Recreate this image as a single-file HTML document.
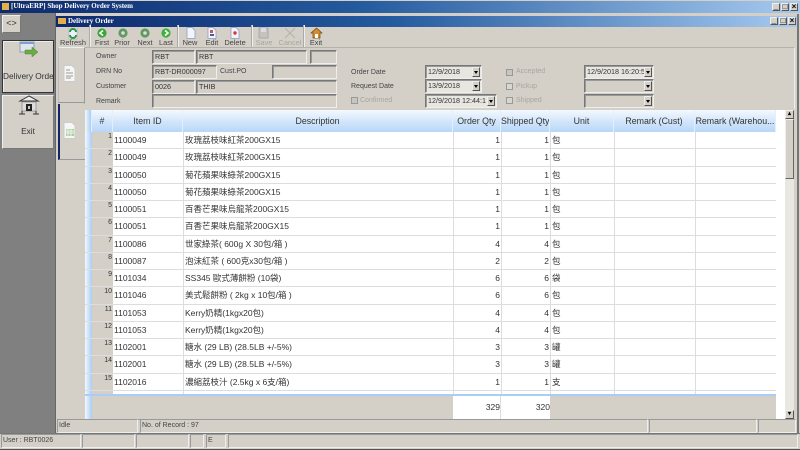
<!DOCTYPE html>
<html><head><meta charset="utf-8">
<style>
html,body{margin:0;padding:0;background:#d4d0c8}
body{width:800px;height:450px;overflow:hidden;background:#d4d0c8;position:relative;font-family:"Liberation Sans","Noto Sans CJK TC",sans-serif;font-size:8px;color:#333;filter:blur(.35px)}
div{position:absolute;box-sizing:border-box;white-space:nowrap}
svg{position:absolute}
.lb{font-size:7px;color:#444;line-height:10px}
.in{background:#d4d0c8;border:1px solid;border-color:#777 #eee #eee #777;box-shadow:inset 1px 1px 0 #999;font-size:7.2px;line-height:12px;padding-left:2px;height:14px;color:#333;overflow:hidden}
.wh{background:#e8e6e0}
.ar{width:8px;height:10px;background:#d4d0c8;border:1px solid;border-color:#eee #555 #555 #eee;top:1px;right:1px}
.ar:after{content:"";position:absolute;left:1px;top:3px;border:2px solid transparent;border-top:3px solid #000}
.tb{font-size:7.4px;color:#444;text-align:center;top:38px;line-height:10px;width:30px}
.dis{color:#a8a6a0}
.sep{top:25px;width:2px;height:22px;border-left:1px solid #aaa;border-right:1px solid #f0eee8}
.h{top:110px;height:23px;background:linear-gradient(#f3f9fe,#cfe4fa 55%,#b6d5f7);font-size:8.8px;line-height:22px;text-align:center;color:#333;border-right:1px solid #e5eefa;overflow:hidden}
.rw{left:85px;width:691px;height:17.25px;background:#fff;border-bottom:1px solid #ddd}
.rm{left:0;top:0;width:7px;height:100%;background:linear-gradient(90deg,#f3f9fe,#a9cdf5)}
.rn{left:7px;top:0;width:21px;height:100%;background:#d4d0c8;font-size:7px;text-align:right;padding-right:1px;line-height:10px;color:#333}
.c{top:0;font-size:8.5px;line-height:17px;color:#333}
.v{top:0;width:1px;height:100%;background:#ddd}
.win{font-size:8px;text-align:center;background:#d4d0c8;border:1px solid;border-color:#eee #555 #555 #eee;width:8px;height:8px;line-height:6px;color:#000;font-weight:bold}
.st{top:419px;height:14px;background:#d4d0c8;border:1px solid;border-color:#999 #eee #eee #999;font-size:7px;line-height:12px;padding-left:1px;color:#444}
.sb{top:434px;height:14px;border:1px solid;border-color:#999 #eee #eee #999;font-size:7px;line-height:12px;padding-left:1px;color:#444}
</style></head><body>

<div style="left:0;top:1px;width:800px;height:12px;background:linear-gradient(90deg,#0e2a6c,#245a9e 45%,#a6caf0);color:#fff;font:bold 7px/11px 'Liberation Serif',serif;padding-left:11px">[UltraERP] Shop Delivery Order System</div>
<div style="left:2px;top:3px;width:7px;height:7px;background:#e2b04a"></div>
<div class="win" style="left:772px;top:3px">_</div><div class="win" style="left:781px;top:3px">□</div><div class="win" style="left:790px;top:3px">×</div>

<div style="left:0;top:13px;width:55px;height:420px;background:#808080"></div>

<div style="left:2px;top:15px;width:19px;height:18px;background:#d4d0c8;border:1px solid;border-color:#eee #777 #777 #eee;font-size:9px;text-align:center;line-height:15px;color:#333">&lt;&gt;</div>

<div style="left:2px;top:40px;width:52px;height:53px;background:#d4d0c8;border:1px solid #333;box-shadow:inset 1px 1px 0 #eee;font-size:8.3px;line-height:70px;text-align:center;color:#333;overflow:hidden">Delivery Order</div>
<svg style="left:19px;top:41px" width="20" height="18" viewBox="0 0 20 18"><rect x="1" y="1" width="14" height="10" fill="#dfe5ec" stroke="#8fa0b8"/><rect x="1" y="1" width="14" height="2" fill="#7f9fcf"/><path d="M6 9h7V6l6 5-6 5v-3H6z" fill="#6cab45" stroke="#4b8a2c" stroke-width=".5"/></svg>

<div style="left:2px;top:95px;width:52px;height:54px;background:#d4d0c8;border:1px solid;border-color:#eee #777 #777 #eee;font-size:8.3px;line-height:70px;text-align:center;color:#333">Exit</div>
<svg style="left:18px;top:95px" width="22" height="22" viewBox="0 0 22 22"><path d="M11 1 2 6h18z" fill="#eee" stroke="#333"/><rect x="4" y="7" width="14" height="9" fill="#ddd" stroke="#777" stroke-width=".6"/><rect x="8" y="9" width="6" height="7" fill="#222"/><rect x="10" y="11" width="2" height="3" fill="#ccc"/><path d="M1 19h6M15 19h6M4 16v3M18 16v3" stroke="#333" fill="none"/></svg>

<div style="left:55px;top:13px;width:1px;height:420px;background:#666"></div>
<div style="left:56px;top:16px;width:742px;height:11px;background:linear-gradient(90deg,#0e2a6c,#245a9e 45%,#a6caf0);color:#fff;font:bold 7px/10px 'Liberation Serif',serif;padding-left:12px">Delivery Order</div>
<div style="left:58px;top:18px;width:8px;height:6px;background:#e2b04a"></div>
<div class="win" style="left:770px;top:17px">_</div><div class="win" style="left:779px;top:17px">□</div><div class="win" style="left:788px;top:17px">×</div>
<div style="left:797px;top:14px;width:2px;height:419px;background:#777"></div>

<!-- Toolbar -->
<svg style="left:67px;top:28px" width="12" height="12" viewBox="0 0 12 12"><rect x="2" y="0" width="8" height="11" fill="#eef" stroke="#99a" stroke-width=".5"/><path d="M3 4a3 3 0 0 1 6 0" stroke="#2a9a3a" fill="none" stroke-width="2"/><path d="M9 7a3 3 0 0 1-6 0" stroke="#2a9a3a" fill="none" stroke-width="2"/></svg>
<div class="tb" style="left:58px">Refresh</div>
<div class="sep" style="left:89px"></div>
<svg style="left:96px;top:28px" width="12" height="10"><circle cx="6" cy="5" r="4.6" fill="#3aa63a"/><path d="M7 2.5 4 5l3 2.500" stroke="#fff" stroke-width="1.6" fill="none"/></svg>
<svg style="left:117px;top:28px" width="12" height="10"><circle cx="6" cy="5" r="4.6" fill="#5f9a5f"/><circle cx="6" cy="5" r="1.8" fill="#ddd"/></svg>
<svg style="left:139px;top:28px" width="12" height="10"><circle cx="6" cy="5" r="4.6" fill="#5f9a5f"/><circle cx="6" cy="5" r="1.8" fill="#ddd"/></svg>
<svg style="left:160px;top:28px" width="12" height="10"><circle cx="6" cy="5" r="4.6" fill="#3eb03e"/><path d="M5 2.500 8 5 5 7.500" stroke="#fff" stroke-width="1.6" fill="none"/></svg>
<div class="tb" style="left:87px">First</div><div class="tb" style="left:107px">Prior</div><div class="tb" style="left:130px">Next</div><div class="tb" style="left:151px">Last</div>
<div class="sep" style="left:177px"></div>
<svg style="left:185px;top:27px" width="12" height="12"><path d="M2 .5h5l3 3v8H2z" fill="#f2f5fb" stroke="#8899bb" stroke-width=".7"/></svg>
<svg style="left:206px;top:27px" width="12" height="12"><path d="M2 .5h5l3 3v8H2z" fill="#f2f5fb" stroke="#8899bb" stroke-width=".7"/><path d="M4 3h3v3H4z" fill="#c55"/><path d="M4 7h4v2H4z" fill="#55a"/></svg>
<svg style="left:229px;top:27px" width="12" height="12"><path d="M2 .5h5l3 3v8H2z" fill="#f2f5fb" stroke="#8899bb" stroke-width=".7"/><circle cx="6" cy="6" r="1.7" fill="#d33"/></svg>
<div class="tb" style="left:175px">New</div><div class="tb" style="left:197px">Edit</div><div class="tb" style="left:220px">Delete</div>
<div class="sep" style="left:251px"></div>
<svg style="left:258px;top:27px" width="12" height="12"><rect x="1" y="1" width="9" height="10" fill="#c5c3bd" stroke="#aaa"/><rect x="3" y="1" width="5" height="4" fill="#ddd"/></svg>
<svg style="left:284px;top:27px" width="12" height="12"><path d="M1 1 11 11M11 1 1 11" stroke="#b5b3ad" stroke-width="1.2"/></svg>
<div class="tb dis" style="left:249px">Save</div><div class="tb dis" style="left:275px">Cancel</div>
<div class="sep" style="left:303px"></div>
<svg style="left:310px;top:27px" width="13" height="12"><path d="M6.500 1 1 6h2v5h7V6h2z" fill="#d98a2e" stroke="#6b4a1a" stroke-width=".7"/><rect x="5" y="7" width="3" height="4" fill="#fff"/></svg>
<div class="tb" style="left:301px">Exit</div>

<!-- Form panel -->
<div style="left:84px;top:47px;width:711px;height:62px;border:1px solid #b5b2aa;border-bottom:none;border-right-color:#eee"></div>
<div style="left:58px;top:47px;width:27px;height:56px;background:#d4d0c8;border:1px solid;border-color:#eee #999 #999 #bbb"></div>
<svg style="left:63px;top:65px" width="13" height="17"><path d="M1 .5h8l3 3v13H1z" fill="#f6f6f4" stroke="#ccc"/><path d="M3 5h4M3 8h7M3 11h7M3 13h5" stroke="#999"/></svg>
<div style="left:58px;top:104px;width:27px;height:56px;background:#d4d0c8;border-left:2px solid #14246a;border-bottom:1px solid #999"></div>
<svg style="left:63px;top:122px" width="13" height="17"><path d="M1 .5h8l3 3v13H1z" fill="#f6f6f4" stroke="#ccc"/><rect x="3" y="7" width="8" height="7" fill="#a8d48a"/><path d="M3 9h8M3 11h8M5 7v7M8 7v7" stroke="#eef"/></svg>

<div class="lb" style="left:96px;top:52px">Owner</div>
<div class="lb" style="left:96px;top:67px">DRN No</div>
<div class="lb" style="left:96px;top:82px">Customer</div>
<div class="lb" style="left:96px;top:97px">Remark</div>
<div class="in" style="left:152px;top:50px;width:43px">RBT</div>
<div class="in" style="left:196px;top:50px;width:111px">RBT</div>
<div class="in" style="left:310px;top:50px;width:27px"></div>
<div class="in" style="left:152px;top:65px;width:65px">RBT-DR000097</div>
<div class="lb" style="left:220px;top:67px">Cust.PO</div>
<div class="in" style="left:272px;top:65px;width:65px"></div>
<div class="in" style="left:152px;top:80px;width:43px">0026</div>
<div class="in" style="left:196px;top:80px;width:141px">THIB</div>
<div class="in" style="left:152px;top:94px;width:185px"></div>

<div class="lb" style="left:351px;top:68px">Order Date</div>
<div class="lb" style="left:351px;top:82px">Request Date</div>
<div class="lb dis" style="left:360px;top:96px">Confirmed</div>
<div style="left:351px;top:97px;width:7px;height:7px;background:#c8c6c0;border:1px solid #999"></div>
<div class="in wh" style="left:425px;top:65px;width:57px">12/9/2018<div class="ar"></div></div>
<div class="in wh" style="left:425px;top:79px;width:57px">13/9/2018<div class="ar"></div></div>
<div class="in wh" style="left:425px;top:94px;width:72px">12/9/2018 12:44:1<div class="ar"></div></div>

<div style="left:506px;top:69px;width:7px;height:7px;background:#c8c6c0;border:1px solid #999"></div>
<div class="lb dis" style="left:516px;top:67px">Accepted</div>
<div style="left:506px;top:83px;width:7px;height:7px;background:#d8d6d0;border:1px solid #999"></div>
<div class="lb dis" style="left:516px;top:82px">Pickup</div>
<div style="left:506px;top:97px;width:7px;height:7px;background:#d8d6d0;border:1px solid #999"></div>
<div class="lb dis" style="left:516px;top:96px">Shipped</div>
<div class="in wh" style="left:584px;top:65px;width:70px">12/9/2018 16:20:5<div class="ar"></div></div>
<div class="in" style="left:584px;top:79px;width:70px"><div class="ar"></div></div>
<div class="in" style="left:584px;top:94px;width:70px"><div class="ar"></div></div>

<!-- Grid -->
<div style="left:85px;top:110px;width:692px;height:310px;background:#d4d0c8"></div>
<div class="h" style="left:85px;width:7px;background:linear-gradient(90deg,#f3f9fe,#a9cdf5)"></div>
<div class="h" style="left:92px;width:21px">#</div>
<div class="h" style="left:113px;width:70px">Item ID</div>
<div class="h" style="left:183px;width:270px">Description</div>
<div class="h" style="left:453px;width:48px">Order Qty</div>
<div class="h" style="left:501px;width:49px">Shipped Qty</div>
<div class="h" style="left:550px;width:64px">Unit</div>
<div class="h" style="left:614px;width:81px">Remark (Cust)</div>
<div class="h" style="left:695px;width:81px">Remark (Warehou...</div>

<div class="rw" style="top:132px"><div class="rm"></div><div class="rn">1</div><div class="c" style="left:29px">1100049</div><div class="c" style="left:100px">玫瑰荔枝味紅茶200GX15</div><div class="c" style="left:368px;width:47px;text-align:right">1</div><div class="c" style="left:416px;width:48px;text-align:right">1</div><div class="c" style="left:467px">包</div><div class="v" style="left:98px"></div><div class="v" style="left:368px"></div><div class="v" style="left:416px"></div><div class="v" style="left:465px"></div><div class="v" style="left:529px"></div><div class="v" style="left:610px"></div></div>
<div class="rw" style="top:149.250px"><div class="rm"></div><div class="rn">2</div><div class="c" style="left:29px">1100049</div><div class="c" style="left:100px">玫瑰荔枝味紅茶200GX15</div><div class="c" style="left:368px;width:47px;text-align:right">1</div><div class="c" style="left:416px;width:48px;text-align:right">1</div><div class="c" style="left:467px">包</div><div class="v" style="left:98px"></div><div class="v" style="left:368px"></div><div class="v" style="left:416px"></div><div class="v" style="left:465px"></div><div class="v" style="left:529px"></div><div class="v" style="left:610px"></div></div>
<div class="rw" style="top:166.500px"><div class="rm"></div><div class="rn">3</div><div class="c" style="left:29px">1100050</div><div class="c" style="left:100px">菊花蘋果味綠茶200GX15</div><div class="c" style="left:368px;width:47px;text-align:right">1</div><div class="c" style="left:416px;width:48px;text-align:right">1</div><div class="c" style="left:467px">包</div><div class="v" style="left:98px"></div><div class="v" style="left:368px"></div><div class="v" style="left:416px"></div><div class="v" style="left:465px"></div><div class="v" style="left:529px"></div><div class="v" style="left:610px"></div></div>
<div class="rw" style="top:183.750px"><div class="rm"></div><div class="rn">4</div><div class="c" style="left:29px">1100050</div><div class="c" style="left:100px">菊花蘋果味綠茶200GX15</div><div class="c" style="left:368px;width:47px;text-align:right">1</div><div class="c" style="left:416px;width:48px;text-align:right">1</div><div class="c" style="left:467px">包</div><div class="v" style="left:98px"></div><div class="v" style="left:368px"></div><div class="v" style="left:416px"></div><div class="v" style="left:465px"></div><div class="v" style="left:529px"></div><div class="v" style="left:610px"></div></div>
<div class="rw" style="top:201px"><div class="rm"></div><div class="rn">5</div><div class="c" style="left:29px">1100051</div><div class="c" style="left:100px">百香芒果味烏龍茶200GX15</div><div class="c" style="left:368px;width:47px;text-align:right">1</div><div class="c" style="left:416px;width:48px;text-align:right">1</div><div class="c" style="left:467px">包</div><div class="v" style="left:98px"></div><div class="v" style="left:368px"></div><div class="v" style="left:416px"></div><div class="v" style="left:465px"></div><div class="v" style="left:529px"></div><div class="v" style="left:610px"></div></div>
<div class="rw" style="top:218.250px"><div class="rm"></div><div class="rn">6</div><div class="c" style="left:29px">1100051</div><div class="c" style="left:100px">百香芒果味烏龍茶200GX15</div><div class="c" style="left:368px;width:47px;text-align:right">1</div><div class="c" style="left:416px;width:48px;text-align:right">1</div><div class="c" style="left:467px">包</div><div class="v" style="left:98px"></div><div class="v" style="left:368px"></div><div class="v" style="left:416px"></div><div class="v" style="left:465px"></div><div class="v" style="left:529px"></div><div class="v" style="left:610px"></div></div>
<div class="rw" style="top:235.500px"><div class="rm"></div><div class="rn">7</div><div class="c" style="left:29px">1100086</div><div class="c" style="left:100px">世家綠茶( 600g X 30包/箱 )</div><div class="c" style="left:368px;width:47px;text-align:right">4</div><div class="c" style="left:416px;width:48px;text-align:right">4</div><div class="c" style="left:467px">包</div><div class="v" style="left:98px"></div><div class="v" style="left:368px"></div><div class="v" style="left:416px"></div><div class="v" style="left:465px"></div><div class="v" style="left:529px"></div><div class="v" style="left:610px"></div></div>
<div class="rw" style="top:252.750px"><div class="rm"></div><div class="rn">8</div><div class="c" style="left:29px">1100087</div><div class="c" style="left:100px">泡沫紅茶 ( 600克x30包/箱 )</div><div class="c" style="left:368px;width:47px;text-align:right">2</div><div class="c" style="left:416px;width:48px;text-align:right">2</div><div class="c" style="left:467px">包</div><div class="v" style="left:98px"></div><div class="v" style="left:368px"></div><div class="v" style="left:416px"></div><div class="v" style="left:465px"></div><div class="v" style="left:529px"></div><div class="v" style="left:610px"></div></div>
<div class="rw" style="top:270px"><div class="rm"></div><div class="rn">9</div><div class="c" style="left:29px">1101034</div><div class="c" style="left:100px">SS345 歐式薄餅粉 (10袋)</div><div class="c" style="left:368px;width:47px;text-align:right">6</div><div class="c" style="left:416px;width:48px;text-align:right">6</div><div class="c" style="left:467px">袋</div><div class="v" style="left:98px"></div><div class="v" style="left:368px"></div><div class="v" style="left:416px"></div><div class="v" style="left:465px"></div><div class="v" style="left:529px"></div><div class="v" style="left:610px"></div></div>
<div class="rw" style="top:287.250px"><div class="rm"></div><div class="rn">10</div><div class="c" style="left:29px">1101046</div><div class="c" style="left:100px">美式鬆餅粉 ( 2kg x 10包/箱 )</div><div class="c" style="left:368px;width:47px;text-align:right">6</div><div class="c" style="left:416px;width:48px;text-align:right">6</div><div class="c" style="left:467px">包</div><div class="v" style="left:98px"></div><div class="v" style="left:368px"></div><div class="v" style="left:416px"></div><div class="v" style="left:465px"></div><div class="v" style="left:529px"></div><div class="v" style="left:610px"></div></div>
<div class="rw" style="top:304.500px"><div class="rm"></div><div class="rn">11</div><div class="c" style="left:29px">1101053</div><div class="c" style="left:100px">Kerry奶精(1kgx20包)</div><div class="c" style="left:368px;width:47px;text-align:right">4</div><div class="c" style="left:416px;width:48px;text-align:right">4</div><div class="c" style="left:467px">包</div><div class="v" style="left:98px"></div><div class="v" style="left:368px"></div><div class="v" style="left:416px"></div><div class="v" style="left:465px"></div><div class="v" style="left:529px"></div><div class="v" style="left:610px"></div></div>
<div class="rw" style="top:321.750px"><div class="rm"></div><div class="rn">12</div><div class="c" style="left:29px">1101053</div><div class="c" style="left:100px">Kerry奶精(1kgx20包)</div><div class="c" style="left:368px;width:47px;text-align:right">4</div><div class="c" style="left:416px;width:48px;text-align:right">4</div><div class="c" style="left:467px">包</div><div class="v" style="left:98px"></div><div class="v" style="left:368px"></div><div class="v" style="left:416px"></div><div class="v" style="left:465px"></div><div class="v" style="left:529px"></div><div class="v" style="left:610px"></div></div>
<div class="rw" style="top:339px"><div class="rm"></div><div class="rn">13</div><div class="c" style="left:29px">1102001</div><div class="c" style="left:100px">糖水 (29 LB) (28.5LB +/-5%)</div><div class="c" style="left:368px;width:47px;text-align:right">3</div><div class="c" style="left:416px;width:48px;text-align:right">3</div><div class="c" style="left:467px">罐</div><div class="v" style="left:98px"></div><div class="v" style="left:368px"></div><div class="v" style="left:416px"></div><div class="v" style="left:465px"></div><div class="v" style="left:529px"></div><div class="v" style="left:610px"></div></div>
<div class="rw" style="top:356.250px"><div class="rm"></div><div class="rn">14</div><div class="c" style="left:29px">1102001</div><div class="c" style="left:100px">糖水 (29 LB) (28.5LB +/-5%)</div><div class="c" style="left:368px;width:47px;text-align:right">3</div><div class="c" style="left:416px;width:48px;text-align:right">3</div><div class="c" style="left:467px">罐</div><div class="v" style="left:98px"></div><div class="v" style="left:368px"></div><div class="v" style="left:416px"></div><div class="v" style="left:465px"></div><div class="v" style="left:529px"></div><div class="v" style="left:610px"></div></div>
<div class="rw" style="top:373.500px"><div class="rm"></div><div class="rn">15</div><div class="c" style="left:29px">1102016</div><div class="c" style="left:100px">濃縮荔枝汁 (2.5kg x 6支/箱)</div><div class="c" style="left:368px;width:47px;text-align:right">1</div><div class="c" style="left:416px;width:48px;text-align:right">1</div><div class="c" style="left:467px">支</div><div class="v" style="left:98px"></div><div class="v" style="left:368px"></div><div class="v" style="left:416px"></div><div class="v" style="left:465px"></div><div class="v" style="left:529px"></div><div class="v" style="left:610px"></div></div>
<div class="rw" style="top:390.750px;height:3.500px;border:none"><div class="rm"></div><div class="rn"></div><div class="v" style="left:98px"></div><div class="v" style="left:368px"></div><div class="v" style="left:416px"></div><div class="v" style="left:465px"></div><div class="v" style="left:529px"></div><div class="v" style="left:610px"></div></div>

<div style="left:85px;top:394px;width:691px;height:2px;background:#a9cdf5"></div>
<div style="left:85px;top:396px;width:7px;height:23px;background:linear-gradient(90deg,#f3f9fe,#a9cdf5)"></div>
<div style="left:453px;top:396px;width:48px;height:23px;background:#fff;border-right:1px solid #ddd;font-size:8.500px;line-height:22px;text-align:right;color:#333">329</div>
<div style="left:501px;top:396px;width:49px;height:23px;background:#fff;font-size:8.500px;line-height:22px;text-align:right;color:#333">320</div>
<div style="left:85px;top:419px;width:692px;height:1px;background:#7f9db9"></div>

<!-- scrollbar -->
<div style="left:776px;top:110px;width:9px;height:310px;background:#fff"></div>
<div style="left:785px;top:110px;width:9px;height:310px;background:#e9e7e2"></div>
<div class="win" style="left:785px;top:110px;width:9px;height:9px;line-height:7px;font-size:6px">▴</div>
<div style="left:785px;top:119px;width:9px;height:60px;background:#d4d0c8;border:1px solid;border-color:#eee #666 #666 #eee"></div>
<div class="win" style="left:785px;top:410px;width:9px;height:9px;line-height:7px;font-size:6px">▾</div>

<!-- status -->
<div class="st" style="left:57px;width:81px">Idle</div>
<div class="st" style="left:140px;width:508px">No. of Record : 97</div>
<div class="st" style="left:649px;width:108px"></div>
<div class="st" style="left:758px;width:38px"></div>
<div style="left:0;top:433px;width:800px;height:1px;background:#777"></div>
<div class="sb" style="left:1px;width:80px">User : RBT0026</div>
<div class="sb" style="left:82px;width:53px"></div>
<div class="sb" style="left:136px;width:53px"></div>
<div class="sb" style="left:190px;width:14px"></div>
<div class="sb" style="left:206px;width:20px">E</div>
<div class="sb" style="left:228px;width:570px"></div>
<div style="left:0;top:449px;width:800px;height:1px;background:#555"></div>
</body></html>
